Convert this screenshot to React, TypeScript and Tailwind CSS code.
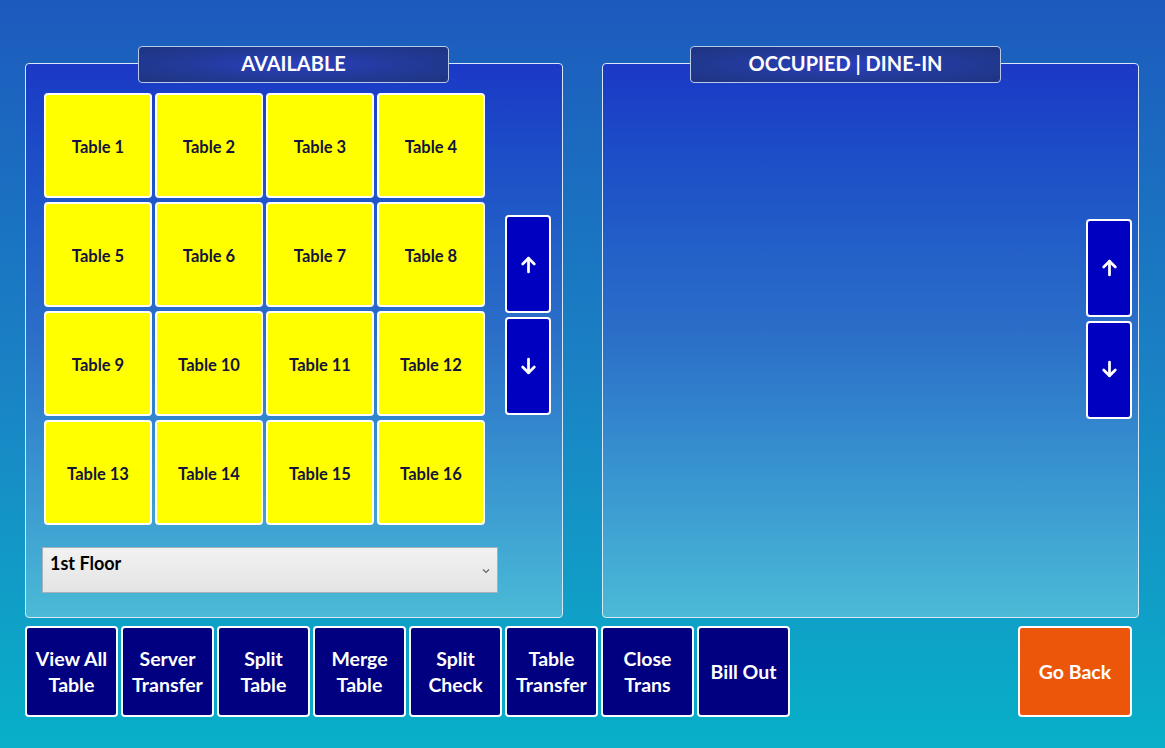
import React from "react";

const font = { fontFamily: "Lato, 'Open Sans', sans-serif" };

function Arrow({ up }: { up?: boolean }) {
  return (
    <svg width="19" height="19" viewBox="0 0 18 18" fill="none" stroke="white" strokeWidth="2.6" strokeLinecap="round" strokeLinejoin="round">
      {up ? (
        <>
          <path d="M9 16V3" />
          <path d="M3.5 8.5L9 3l5.5 5.5" />
        </>
      ) : (
        <>
          <path d="M9 2v13" />
          <path d="M3.5 9.5L9 15l5.5-5.5" />
        </>
      )}
    </svg>
  );
}

function ArrowButtons() {
  return (
    <div className="flex flex-col gap-[4px]">
      <button className="w-[46px] h-[98px] bg-[#0000c0] border-2 border-white rounded-[4px] flex items-center justify-center">
        <Arrow up />
      </button>
      <button className="w-[46px] h-[98px] bg-[#0000c0] border-2 border-white rounded-[4px] flex items-center justify-center">
        <Arrow />
      </button>
    </div>
  );
}

function Header({ title }: { title: string }) {
  return (
    <div className="relative z-10 w-[311px] h-[37px] rounded-[4px] border border-[#b8c8e8] flex items-center justify-center text-white font-bold text-[20px] pb-[4px] bg-[radial-gradient(ellipse_at_center,#2a3fbf_0%,#233a9a_50%,#1e3580_100%)]">
      {title}
    </div>
  );
}

const bottomButtons = [
  ["View All", "Table"],
  ["Server", "Transfer"],
  ["Split", "Table"],
  ["Merge", "Table"],
  ["Split", "Check"],
  ["Table", "Transfer"],
  ["Close", "Trans"],
  ["Bill Out"],
];

export default function App() {
  const tables = Array.from({ length: 16 }, (_, i) => `Table ${i + 1}`);
  return (
    <div
      style={font}
      className="w-[1165px] h-[748px] overflow-hidden bg-gradient-to-b from-[#1d5abd] via-[#1a82c4] to-[#07b0c8] flex flex-col pl-[25px] pt-[46px]"
    >
      <div className="flex gap-[39px]">
        {/* Left panel */}
        <div className="flex flex-col w-[538px]">
          <div className="ml-[113px]">
            <Header title="AVAILABLE" />
          </div>
          <div className="mt-[-20px] h-[555px] rounded-[4px] border border-[#d8e8f8] bg-gradient-to-b from-[#1b38c6] via-[#2c70c8] to-[#4bbad6] pl-[18px] pt-[29px] flex flex-col">
            <div className="flex items-center gap-[20px]">
              <div className="grid grid-cols-[repeat(4,108px)] auto-rows-[105px] gap-x-[3px] gap-y-[4px]">
                {tables.map((t) => (
                  <div
                    key={t}
                    className="bg-[#ffff00] border-2 border-white rounded-[4px] flex items-center justify-center pt-[3px] text-[#14143c] font-bold text-[16.5px]"
                  >
                    {t}
                  </div>
                ))}
              </div>
              <div className="mt-[12px]">
                <ArrowButtons />
              </div>
            </div>
            <div className="mt-[22px] ml-[-2px] w-[456px] h-[46px] border border-[#a8b0b8] bg-gradient-to-b from-[#f2f2f2] to-[#e4e4e4] flex items-start justify-between px-[7px] pt-[2px]">
              <span className="text-black font-bold text-[18px]">1st Floor</span>
              <svg className="mt-[18px]" width="8" height="6" viewBox="0 0 8 6" fill="none" stroke="#666" strokeWidth="1.2">
                <path d="M1 1.5l3 3 3-3" />
              </svg>
            </div>
          </div>
        </div>
        {/* Right panel */}
        <div className="flex flex-col w-[537px]">
          <div className="ml-[88px]">
            <Header title="OCCUPIED | DINE-IN" />
          </div>
          <div className="mt-[-20px] h-[555px] rounded-[4px] border border-[#d8e8f8] bg-gradient-to-b from-[#1b38c6] via-[#2c70c8] to-[#4bbad6] flex items-center justify-end pr-[6px] pb-[44px]">
            <ArrowButtons />
          </div>
        </div>
      </div>
      <div className="mt-[8px] flex pr-[33px]">
        <div className="flex gap-[3px]">
          {bottomButtons.map((lines, i) => (
            <button
              key={i}
              className="w-[93px] h-[91px] bg-[#000080] border-2 border-white rounded-[4px] flex flex-col items-center justify-center text-white font-bold text-[19.5px] leading-[26px]"
            >
              {lines.map((l) => (
                <span key={l}>{l}</span>
              ))}
            </button>
          ))}
        </div>
        <button className="ml-auto w-[114px] h-[91px] bg-[#eb560b] border-2 border-white rounded-[4px] flex items-center justify-center text-white font-bold text-[19.5px]">
          Go Back
        </button>
      </div>
    </div>
  );
}
